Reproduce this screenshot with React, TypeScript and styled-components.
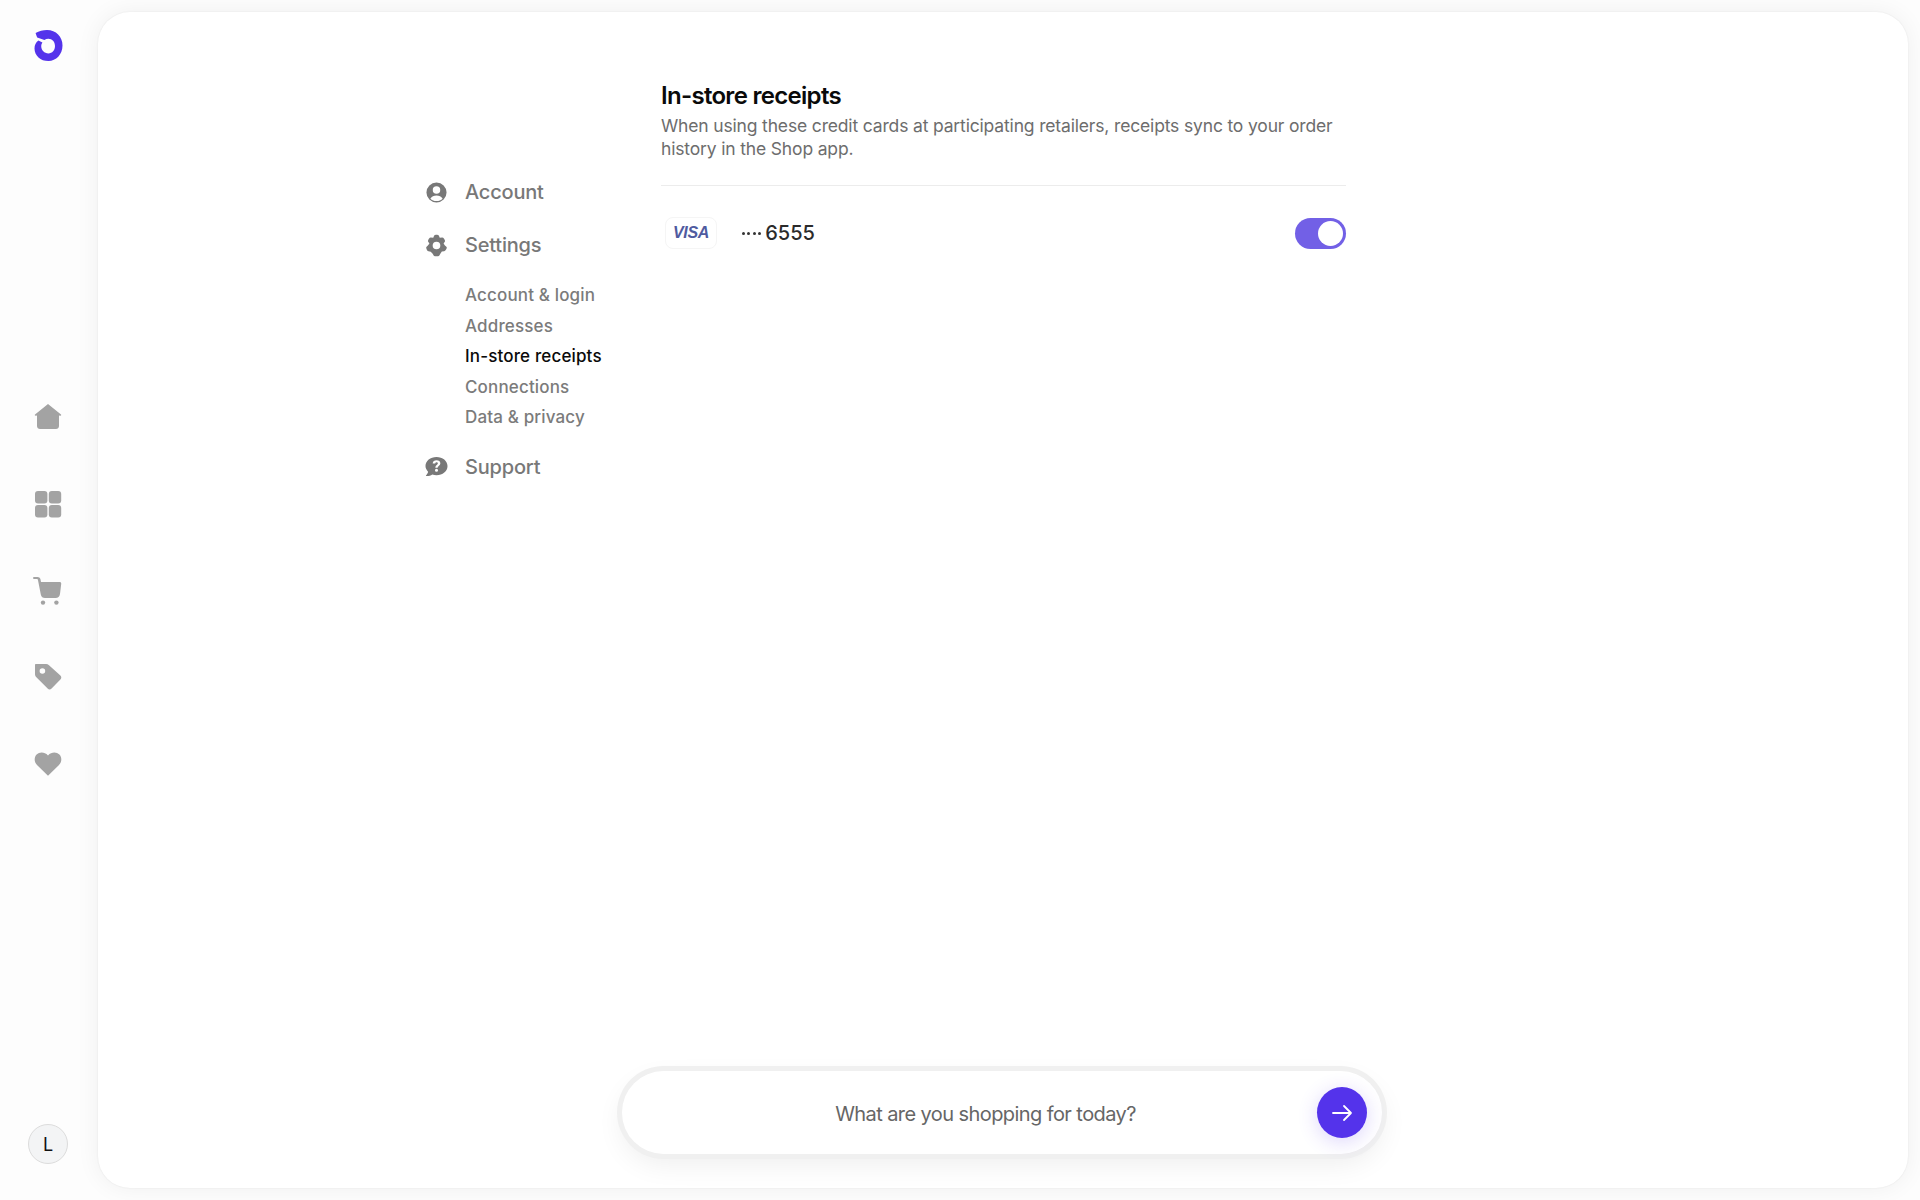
import React from "react";
import styled, { createGlobalStyle } from "styled-components";

const Global = createGlobalStyle`
  html, body { margin: 0; padding: 0; height: 100%; background: #fdfdfd; }
  body { font-family: Inter, "Liberation Sans", sans-serif; -webkit-font-smoothing: antialiased; }
  #root { height: 100%; }
`;

const Page = styled.div`
  display: flex;
  width: 1920px;
  height: 1200px;
  overflow: hidden;
  background: #fdfdfd;
`;

const Sidebar = styled.aside`
  flex: 0 0 98px;
  display: flex;
  flex-direction: column;
  align-items: center;
  padding: 30px 2px 36px 0;
  box-sizing: border-box;
`;

const Logo = styled.svg`
  width: 29px;
  height: 31px;
  display: block;
`;

const Rail = styled.nav`
  display: flex;
  flex-direction: column;
  align-items: center;
  gap: 58px;
  margin-top: 341px;
`;

const RailIcon = styled.svg`
  width: 30px;
  height: 29px;
  display: block;
  fill: #a3a3a3;
`;

const Avatar = styled.div`
  margin-top: auto;
  width: 40px;
  height: 40px;
  box-sizing: border-box;
  border-radius: 50%;
  background: #f3f4f5;
  border: 1px solid #dcdcdc;
  display: flex;
  align-items: center;
  justify-content: center;
  font-size: 18px;
  font-weight: 400;
  color: #111;
`;

const Card = styled.main`
  flex: 1;
  margin: 12px 12px 12px 0;
  background: #fff;
  border-radius: 32px;
  box-shadow: 0 0 24px rgba(0, 0, 0, 0.06), 0 0 2px rgba(0, 0, 0, 0.08);
  display: flex;
  flex-direction: column;
  min-width: 0;
`;

const Content = styled.div`
  flex: 1;
  display: flex;
  padding: 70px 0 0 326px;
`;

const Menu = styled.nav`
  flex: 0 0 237px;
  box-sizing: border-box;
  display: flex;
  flex-direction: column;
  padding: 95px 0 0 1px;
`;

const MenuRow = styled.div<{ $gap?: number }>`
  display: flex;
  align-items: center;
  gap: 17px;
  height: 30px;
  margin-bottom: ${(p) => p.$gap ?? 0}px;
  color: #787878;
  font-size: 20px;
  font-weight: 500;
  letter-spacing: -0.2px;
`;

const MenuIcon = styled.svg`
  flex: 0 0 23px;
  width: 23px;
  height: 23px;
  fill: #787878;
`;

const SubMenu = styled.div`
  display: flex;
  flex-direction: column;
  padding-left: 40px;
  margin-bottom: 19px;
`;

const SubItem = styled.div<{ $active?: boolean }>`
  height: 30.5px;
  line-height: 30.5px;
  font-size: 17px;
  font-weight: 500;
  letter-spacing: 0.15px;
  white-space: nowrap;
  color: ${(p) => (p.$active ? "#0a0a0a" : "#7b7b7b")};
`;

const Section = styled.section`
  flex: 0 0 685px;
`;

const Title = styled.h1`
  margin: 0;
  font-size: 24px;
  line-height: 28px;
  font-weight: 600;
  letter-spacing: -0.7px;
  color: #0a0a0a;
`;

const Description = styled.p`
  margin: 4px 0 0;
  font-size: 17.5px;
  line-height: 23px;
  font-weight: 400;
  letter-spacing: -0.16px;
  color: #6d6d6d;
`;

const Divider = styled.hr`
  margin: 25px 0 0;
  border: 0;
  height: 1px;
  background: #ececec;
`;

const CardRow = styled.div`
  display: flex;
  align-items: center;
  margin-top: 31px;
`;

const VisaChip = styled.div`
  margin-left: 4px;
  width: 52px;
  height: 32px;
  box-sizing: border-box;
  border: 1px solid #f5f5f5;
  border-radius: 8px;
  display: flex;
  align-items: center;
  justify-content: center;
  font-family: "Liberation Sans", Arial, sans-serif;
  font-style: italic;
  font-weight: 700;
  font-size: 16px;
  letter-spacing: -0.3px;
  color: #4f5b9f;
`;

const Dots = styled.span`
  margin-left: 25px;
  display: inline-flex;
  gap: 2.4px;
`;

const Dot = styled.i`
  width: 3px;
  height: 3px;
  border-radius: 50%;
  background: #333;
`;

const CardNumber = styled.span`
  margin-left: 4px;
  font-size: 20px;
  font-weight: 500;
  color: #2b2b2b;
`;

const Toggle = styled.div`
  margin-left: auto;
  width: 51px;
  height: 31px;
  box-sizing: border-box;
  border-radius: 16px;
  background: #7260e6;
  padding: 3px;
  display: flex;
  justify-content: flex-end;
`;

const Knob = styled.div`
  width: 25px;
  height: 25px;
  border-radius: 50%;
  background: #fff;
`;

const SearchWrap = styled.div`
  display: flex;
  justify-content: center;
  padding: 0 2px 34px 0;
`;

const SearchBar = styled.div`
  position: relative;
  width: 760px;
  height: 83px;
  box-sizing: border-box;
  border-radius: 42px;
  background: #fff;
  box-shadow: 0 0 0 5px #f0f0f0, 0 10px 28px rgba(0, 0, 0, 0.07);
  display: flex;
  align-items: center;
  justify-content: center;
`;

const Placeholder = styled.span`
  font-size: 20px;
  letter-spacing: -0.58px;
  color: #666;
  margin-left: -33px;
  margin-top: 2px;
`;

const SendButton = styled.button`
  position: absolute;
  right: 15px;
  top: 16px;
  width: 50px;
  height: 51px;
  padding: 0;
  border: 0;
  border-radius: 50%;
  background: #5433eb;
  box-shadow: 0 4px 20px rgba(84, 51, 235, 0.2);
  display: flex;
  align-items: center;
  justify-content: center;
`;

export default function App() {
  return (
    <Page>
      <Global />
      <Sidebar>
        <Logo viewBox="0 0 29 31" aria-label="Shop">
          <path
            fill="#5433eb"
            d="M1.6 3 C5 1 9 0 13 0 C22 0 28.5 6.8 28.5 15.5 C28.5 24.5 22 31 14.5 31 C6.5 31 .5 25.5 .5 18.4 C.5 15 1.8 12.4 4.4 10.4 L8.4 12.4 C7.6 13.4 7.2 14.6 7.2 16 C7.2 20.2 10.4 23.4 14.4 23.4 C18.2 23.4 21 20.2 21 16 C21 11.8 18.2 8.8 14.4 8.8 C13 8.8 11.6 9.2 10.4 9.9 L3.2 7.4 C2.6 6 2 4.4 1.6 3 Z"
          />
        </Logo>
        <Rail>
          <RailIcon viewBox="0 0 30 29">
            <path d="M15 2 L28 12.6 C28.6 13.2 28 14 27.2 13.8 L26 13.4 V24 C26 26 24.6 27 23 27 H7 C5.4 27 4 26 4 24 V13.4 L2.8 13.8 C2 14 1.4 13.2 2 12.6 Z" />
          </RailIcon>
          <RailIcon viewBox="0 -1 30 29">
            <rect x="2" y="1" width="12.4" height="12.6" rx="3" />
            <rect x="15.8" y="1" width="12.4" height="12.6" rx="3" />
            <rect x="2" y="15" width="12.4" height="12.6" rx="3" />
            <rect x="15.8" y="15" width="12.4" height="12.6" rx="3" />
          </RailIcon>
          <RailIcon viewBox="0 -1 30 29">
            <path d="M1 0 H4.6 C6 0 7 .8 7.4 2 L8 5 H26.6 C27.8 5 28.4 5.8 28.2 7 L27 17 C26.6 19.4 25 21 22.6 21 H12 C9.8 21 8.2 19.6 7.8 17.4 L5 3.2 C4.8 2.4 4.6 2 3.8 2 H1 C-.2 2 -.2 0 1 0 Z" />
            <circle cx="10" cy="25.6" r="2.2" />
            <circle cx="23.4" cy="25.6" r="2.2" />
          </RailIcon>
          <RailIcon viewBox="0 1 30 29">
            <path
              fillRule="evenodd"
              d="M3 2 H13 C14.2 2 15.2 2.4 16 3.2 L27.4 13.6 C28.6 14.8 28.6 16.4 27.4 17.6 L18.6 26.6 C17.4 27.8 15.8 27.8 14.6 26.6 L3.6 15.6 C2.6 14.6 2 13.4 2 12 V3 C2 2.4 2.4 2 3 2 Z M9.4 6.2 A2.8 2.8 0 1 0 9.4 11.8 A2.8 2.8 0 1 0 9.4 6.2 Z"
            />
          </RailIcon>
          <RailIcon viewBox="0 1 30 29">
            <path d="M15 26.8 L4 16 C1 13 1 8.4 3.6 5.6 C6.6 2.6 11.6 2.8 15 6.4 C18.4 2.8 23.4 2.6 26.4 5.6 C29 8.4 29 13 26 16 Z" />
          </RailIcon>
        </Rail>
        <Avatar>L</Avatar>
      </Sidebar>
      <Card>
        <Content>
          <Menu>
            <MenuRow $gap={23}>
              <MenuIcon viewBox="0 0 24 24">
                <path
                  fillRule="evenodd"
                  d="M12 1.5 A10.5 10.5 0 1 0 12 22.5 A10.5 10.5 0 1 0 12 1.5 Z M12 5.6 A3.9 3.9 0 1 1 12 13.4 A3.9 3.9 0 1 1 12 5.6 Z M5.6 18.4 C7 16 9.2 15 12 15 C14.8 15 17 16 18.4 18.4 C16.8 19.9 14.6 20.8 12 20.8 C9.4 20.8 7.2 19.9 5.6 18.4 Z"
                />
              </MenuIcon>
              Account
            </MenuRow>
            <MenuRow $gap={20}>
              <MenuIcon viewBox="0 0 24 24">
                <path
                  fillRule="evenodd"
                  d="M9.6 1.6 C10.2 .6 13.8 .6 14.4 1.6 L15.4 4 L18 3.6 C19.4 3.6 21.4 6.6 20.8 7.8 L19.4 9.8 L20.8 12 L22.6 13.6 C23.2 14.8 21.4 18 20 18 L17.6 18.2 L16 20.6 L14.8 22.6 C13.8 23.4 10.2 23.4 9.2 22.6 L8 20.6 L6 18.4 L3.6 18 C2.4 17.8 .8 14.8 1.4 13.6 L3 12 L4.6 9.8 L3.2 7.8 C2.6 6.6 4.6 3.6 6 3.6 L8.6 4 Z M12 8 A4 4 0 1 0 12 16 A4 4 0 1 0 12 8 Z"
                />
              </MenuIcon>
              Settings
            </MenuRow>
            <SubMenu>
              <SubItem>Account &amp; login</SubItem>
              <SubItem>Addresses</SubItem>
              <SubItem $active>In-store receipts</SubItem>
              <SubItem>Connections</SubItem>
              <SubItem>Data &amp; privacy</SubItem>
            </SubMenu>
            <MenuRow>
              <MenuIcon viewBox="0 0 24 24">
                <path
                  fillRule="evenodd"
                  d="M12 2 C18.4 2 23.5 6 23.5 11.6 C23.5 17.2 18.4 21.2 12 21.2 C10.4 21.2 9 21 7.6 20.4 C5.8 21.6 3.4 22.2 1.4 22 C1 22 .8 21.4 1.2 21 C2.2 20 3 18.6 3.2 17.4 C1.4 15.6 .5 13.6 .5 11.6 C.5 6 5.6 2 12 2 Z M12 5.4 C9.8 5.4 8.2 6.6 8 8.8 H10.6 C10.8 8 11.2 7.6 12 7.6 C12.8 7.6 13.4 8 13.4 8.8 C13.4 10.2 10.8 10.4 10.8 13.4 H13.2 C13.2 11.4 16 11.2 16 8.6 C16 6.6 14.4 5.4 12 5.4 Z M12 14.4 A1.6 1.6 0 1 0 12 17.6 A1.6 1.6 0 1 0 12 14.4 Z"
                />
              </MenuIcon>
              Support
            </MenuRow>
          </Menu>
          <Section>
            <Title>In-store receipts</Title>
            <Description>
              When using these credit cards at participating retailers, receipts sync to your order
              history in the Shop app.
            </Description>
            <Divider />
            <CardRow>
              <VisaChip>VISA</VisaChip>
              <Dots>
                <Dot />
                <Dot />
                <Dot />
                <Dot />
              </Dots>
              <CardNumber>6555</CardNumber>
              <Toggle>
                <Knob />
              </Toggle>
            </CardRow>
          </Section>
        </Content>
        <SearchWrap>
          <SearchBar>
            <Placeholder>What are you shopping for today?</Placeholder>
            <SendButton aria-label="Send">
              <svg width="24" height="24" viewBox="0 0 24 24" fill="none" stroke="#fff" strokeWidth="1.8" strokeLinecap="round" strokeLinejoin="round">
                <path d="M3 12 H21 M14 5 L21 12 L14 19" />
              </svg>
            </SendButton>
          </SearchBar>
        </SearchWrap>
      </Card>
    </Page>
  );
}
